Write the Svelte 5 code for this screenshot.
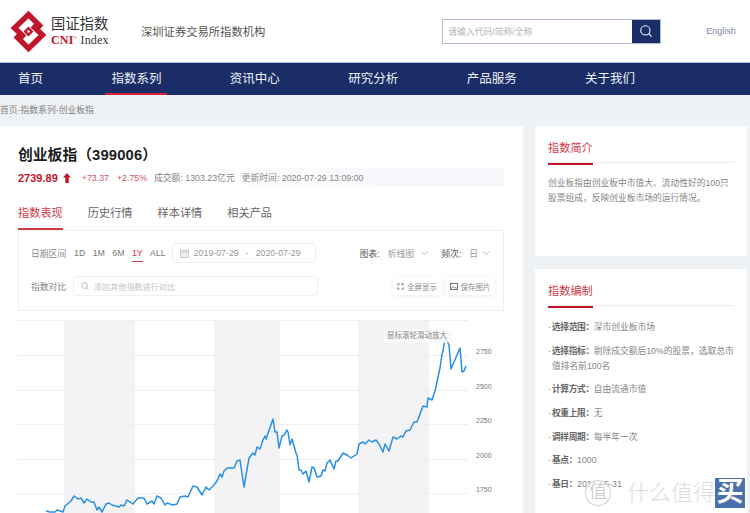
<script>
  const pts = "46,511 50,512 55,512 57,510 63,512 65,506 71,501 74,496 78,499 81,498 84,503 87,499 91,502 94,502 97,510 99,507 102,512 106,504 109,503 112,505 119,507 121,505 124,506 127,500 133,504 138,498 144,498 147,504 152,501 154,504 157,496 161,498 165,505 167,503 173,505 177,504 180,497 185,496 188,497 193,486 197,487 202,495 206,487 209,490 213,486 217,481 220,474 222,477 224,471 227,468 234,468 237,461 240,460 244,487 249,458 253,453 255,455 257,447 260,449 263,440 265,436 266,439 273,419 275,432 277,432 279,448 282,436 284,435 287,430 288,432 290,445 292,439 296,453 297,455 299,470 301,470 303,474 306,471 309,482 312,467 314,468 317,477 321,476 323,470 325,471 327,463 330,460 334,469 336,461 338,461 343,453 347,455 351,458 357,454 359,444 363,442 365,444 369,440 372,442 376,440 379,444 383,452 385,444 389,451 393,437 397,439 401,436 403,437 406,431 410,430 414,422 417,422 423,406 427,407 428,398 432,400 435,391 440,368 442,354 443,351 445,338 447,341 449,345 451,369 460,348 462,372 464,371 466,366";
  const nav = ["首页", "指数系列", "资讯中心", "研究分析", "产品服务", "关于我们"];
  const tabs = ["指数表现", "历史行情", "样本详情", "相关产品"];
  const ranges = ["1D", "1M", "6M", "1Y", "ALL"];
  const bands = [[64, 71], [214, 66], [358, 71]];
  const grid = [320, 355, 390, 424, 459, 493];
  const axis = [[2750, 354], [2500, 389], [2250, 423], [2000, 458], [1750, 492]];
  const rules = [
    ["选择范围", "深市创业板市场"],
    ["选择指标", "剔除成交额后10%的股票，选取总市值排名前100名"],
    ["计算方式", "自由流通市值"],
    ["权重上限", "无"],
    ["调样周期", "每半年一次"],
    ["基点", "1000"],
    ["基日", "2010-05-31"]
  ];
</script>

<div class="page">
  <header class="top">
    <div class="logo">
      <svg class="mark" viewBox="8 8 42 46" width="42" height="46" aria-hidden="true">
        <path d="M41.5 27.5 28.5 14.5 14.5 28 24.5 37.5" fill="none" stroke="#c0152b" stroke-width="5.4"/>
        <path d="M15.5 35.5 28.5 48.5 42.5 35 32.5 25.5" fill="none" stroke="#c0152b" stroke-width="5.4"/>
        <path d="M28.5 26.5 33.5 31.5 28.5 36.5 23.5 31.5Z" fill="#c0152b"/>
        <circle cx="28.5" cy="31.5" r="1.3" fill="#fff"/>
      </svg>
      <div class="logotext">
        <div class="cn">国证指数</div>
        <div class="en"><b>CNI</b><sup>®</sup> Index</div>
      </div>
    </div>
    <div class="tagline">深圳证券交易所指数机构</div>
    <div class="search">
      <span class="ph">请输入代码/简称/全称</span>
      <span class="sbtn">
        <svg viewBox="0 0 16 16" width="14" height="14" fill="none" stroke="#fff" stroke-width="1.2" aria-hidden="true"><circle cx="7.3" cy="7.3" r="5.3"/><path d="M11 11l3.4 3.4"/></svg>
      </span>
    </div>
    <div class="lang">English</div>
  </header>

  <nav class="nav">
    {#each nav as item, i}
      <span class="navitem" class:on={i === 1}>{item}</span>
    {/each}
  </nav>

  <div class="crumb">首页-指数系列-创业板指</div>

  <main class="main">
    <section class="left">
      <h1>创业板指（<span>399006</span>）</h1>
      <div class="quote">
        <b class="price">2739.89</b>
        <svg class="arrow" viewBox="0 0 8 10" width="8" height="10" aria-hidden="true"><path d="M4 0 8 4.6H5.7V10H2.3V4.6H0Z" fill="#c4142b"/></svg>
        <span class="chg first">+73.37</span>
        <span class="chg second">+2.75%</span>
        <span class="meta one">成交额: 1303.23亿元</span>
        <span class="meta">更新时间: 2020-07-29 13:09:00</span>
      </div>
      <div class="tabs">
        {#each tabs as t, i}<span class="tab" class:on={i === 0}>{t}</span>{/each}
      </div>

      <div class="filters">
        <div class="frow r1">
          <span class="flabel">日期区间</span>
          <div class="ranges">
            {#each ranges as r}<span class="range" class:on={r === "1Y"}>{r}</span>{/each}
          </div>
          <div class="datebox">
            <svg viewBox="0 0 9 9" width="9" height="9" aria-hidden="true"><rect x=".5" y="1" width="8" height="7.5" fill="#eee" stroke="#ccc"/><path d="M.5 3h8" stroke="#ccc"/></svg>
            <span class="d1">2019-07-29</span><span class="dash">-</span><span>2020-07-29</span>
          </div>
          <div class="selects">
            <b>图表:</b><span class="val v1">折线图</span>
            <svg class="chev" viewBox="0 0 7 4" width="7" height="4" aria-hidden="true"><path d="M.5.5 3.5 3.5 6.5.5"/></svg>
            <b class="second-b">频次:</b><span class="val v2">日</span>
            <svg class="chev" viewBox="0 0 7 4" width="7" height="4" aria-hidden="true"><path d="M.5.5 3.5 3.5 6.5.5"/></svg>
          </div>
        </div>
        <div class="frow r2">
          <span class="flabel">指数对比</span>
          <div class="cmp">
            <svg viewBox="0 0 8 8" width="8" height="8" fill="none" stroke="#bbb" aria-hidden="true"><circle cx="3.6" cy="3.6" r="2.9"/><path d="M5.8 5.8 7.6 7.6"/></svg>
            <span>添加其他指数进行对比</span>
          </div>
          <div class="btns">
            <span class="btn">
              <svg viewBox="0 0 8 8" width="7" height="7" fill="none" stroke="#666" aria-hidden="true"><path d="M1 3V1h2M5 1h2v2M7 5v2H5M3 7H1V5"/></svg>全屏显示</span>
            <span class="btn">
              <svg viewBox="0 0 9 8" width="8" height="7" fill="none" stroke="#666" aria-hidden="true"><rect x=".5" y=".5" width="8" height="7"/><path d="M1 6.5 3.5 4l2 2 1-1 1.5 1.5"/></svg>保存图片</span>
          </div>
        </div>
      </div>

      <div class="chart">
        <svg viewBox="0 320 523 193" width="523" height="193" aria-hidden="true">
          {#each bands as b}<rect x={b[0]} y="320" width={b[1]} height="193" fill="#f3f3f5"/>{/each}
          {#each grid as g}<path d="M18 {g}.5H468" stroke="#f1edf2"/>{/each}
          <polyline points={pts} fill="none" stroke="#2a8fe3" stroke-width="1.5" stroke-linejoin="round"/>
          {#each axis as a}<text x="476" y={a[1]} class="tick">{a[0]}</text>{/each}
        </svg>
        <div class="hint">鼠标滚轮滑动放大</div>
      </div>
    </section>

    <aside class="right">
      <section class="card c1">
        <div class="ctitle"><span>指数简介</span></div>
        <p>创业板指由创业板中市值大、流动性好的100只股票组成，反映创业板市场的运行情况。</p>
      </section>
      <section class="card c2">
        <div class="ctitle"><span>指数编制</span></div>
        <ul>
          {#each rules as r}
            <li><b>{r[0]}：</b>{r[1]}</li>
          {/each}
        </ul>
      </section>
    </aside>
  </main>

  <div class="wm">
    <span class="wmc">值</span>
    <span class="wmt">什么值得</span>
    <span class="wmb">买</span>
  </div>
</div>

<style>
  :global(body) {
    margin: 0;
    background: #eff2f5;
  }
  .page {
    position: relative;
    width: 750px;
    height: 513px;
    overflow: hidden;
    font-family: "Liberation Sans", "Noto Sans CJK SC", sans-serif;
    color: #666;
  }
  .top {
    position: relative;
    display: flex;
    align-items: center;
    height: 62px;
    background: #fff;
    border-bottom: 1px solid #b9c4da;
    box-sizing: content-box;
  }
  .logo {
    display: flex;
    align-items: center;
    width: 141px;
    padding-left: 8px;
    box-sizing: border-box;
  }
  .mark {
    flex: none;
  }
  .logotext {
    margin-left: 1px;
    color: #333;
    font-family: "Liberation Serif", "Noto Sans CJK SC", serif;
  }
  .cn {
    font-size: 14.3px;
    line-height: 18px;
  }
  .en {
    font-size: 12px;
    line-height: 14px;
    white-space: nowrap;
    letter-spacing: .15px;
  }
  .en b {
    color: #c0152b;
  }
  .en sup {
    font-size: 5px;
    line-height: 0;
    color: #c0152b;
  }
  .tagline {
    font-size: 11.3px;
    color: #555;
    white-space: nowrap;
  }
  .search {
    display: flex;
    align-items: center;
    justify-content: space-between;
    box-sizing: border-box;
    width: 219px;
    height: 25px;
    margin-left: 177px;
    border: 1px solid #b3bfd8;
    background: #fff;
  }
  .ph {
    margin-left: 5px;
    font-size: 8.8px;
    color: #b4b4b4;
  }
  .sbtn {
    display: flex;
    align-items: center;
    justify-content: center;
    width: 28px;
    height: 23px;
    background: #1a2d66;
  }
  .lang {
    margin-left: 45px;
    font-size: 9px;
    color: #7d8aa3;
  }
  .nav {
    display: flex;
    gap: 68.4px;
    height: 32px;
    padding-left: 18px;
    background: #1a2d66;
  }
  .navitem {
    position: relative;
    font-size: 12.5px;
    line-height: 33px;
    color: #eef1f7;
    white-space: nowrap;
  }
  .navitem.on::after {
    content: "";
    position: absolute;
    left: -6px;
    right: -6px;
    bottom: 0;
    height: 2px;
    background: #d3223a;
  }
  .crumb {
    height: 31px;
    font-size: 8.8px;
    line-height: 30px;
    color: #808080;
    white-space: nowrap;
  }
  .main {
    display: grid;
    grid-template-columns: 523px 212px;
    column-gap: 12px;
  }
  .left {
    height: 387px;
    background: #fff;
    overflow: hidden;
  }
  h1 {
    margin: 19px 0 0 18px;
    height: 20px;
    font-size: 14.8px;
    line-height: 20px;
    font-weight: 700;
    color: #1c1c1c;
    white-space: nowrap;
  }
  h1 span {
    letter-spacing: .15px;
  }
  .quote {
    display: flex;
    align-items: center;
    width: 486px;
    height: 19px;
    margin: 3px 0 0 18px;
    background: linear-gradient(90deg, #fff 35%, #f6f8fb 75%);
    font-size: 8.8px;
    white-space: nowrap;
  }
  .price {
    font-size: 11px;
    color: #c4142b;
  }
  .arrow {
    margin-left: 5px;
  }
  .chg {
    color: #cf5160;
  }
  .first {
    margin-left: 11px;
  }
  .second {
    margin-left: 8px;
  }
  .meta {
    color: #858585;
    margin-left: 7px;
  }
  .tabs {
    display: flex;
    gap: 25px;
    margin: 16px 0 0 18px;
    height: 27px;
  }
  .tab {
    box-sizing: border-box;
    height: 27px;
    font-size: 11.2px;
    line-height: 20px;
    color: #666;
    white-space: nowrap;
  }
  .tab.on {
    color: #cf3b4b;
    border-bottom: 2px solid #cf3b4b;
  }
  .filters {
    box-sizing: border-box;
    width: 486px;
    height: 81px;
    margin-left: 18px;
    border: 1px solid #efefef;
    font-size: 8.8px;
    color: #888;
  }
  .frow {
    display: flex;
    align-items: center;
    padding-left: 12px;
    white-space: nowrap;
  }
  .r1 {
    height: 20px;
    margin-top: 12px;
  }
  .r2 {
    height: 20px;
    margin-top: 13px;
  }
  .flabel {
    width: 35px;
    flex: none;
  }
  .ranges {
    display: flex;
    gap: 7.4px;
    margin-left: 8px;
    color: #777;
  }
  .range {
    position: relative;
  }
  .range.on {
    color: #cf3b4b;
  }
  .range.on::after {
    content: "";
    position: absolute;
    left: 0;
    right: 0;
    bottom: -4px;
    height: 1px;
    background: #cf3b4b;
  }
  .datebox {
    display: flex;
    align-items: center;
    box-sizing: border-box;
    width: 144px;
    height: 20px;
    margin-left: 6px;
    padding-left: 7px;
    border: 1px solid #f0f0f0;
    border-radius: 3px;
    color: #999;
  }
  .d1 {
    margin-left: 5px;
  }
  .dash {
    margin: 0 7px;
  }
  .selects {
    display: flex;
    align-items: center;
    margin-left: 44px;
  }
  .selects b {
    font-weight: 400;
    color: #555;
  }
  .second-b {
    margin-left: 13px;
  }
  .val {
    color: #999;
    margin-left: 8px;
  }
  .chev {
    margin-left: 7px;
    fill: none;
    stroke: #aaa;
    stroke-width: .8;
  }
  .v2 + .chev {
    margin-left: 5px;
  }
  .cmp {
    display: flex;
    align-items: center;
    gap: 5px;
    box-sizing: border-box;
    width: 245px;
    height: 20px;
    margin-left: 7px;
    padding-left: 7px;
    border: 1px solid #f0f0f0;
    border-radius: 3px;
    font-size: 8.1px;
    color: #c4c4c4;
  }
  .btns {
    display: flex;
    gap: 5px;
    margin-left: 75px;
  }
  .btn {
    display: flex;
    align-items: center;
    justify-content: center;
    gap: 3px;
    width: 48px;
    height: 18px;
    font-size: 7.5px;
    color: #888;
    background: #fff;
    box-shadow: 0 1px 4px rgba(0, 0, 0, .08);
    border-radius: 2px;
  }
  .chart {
    position: relative;
    height: 193px;
    margin-top: 9px;
  }
  .chart svg {
    display: block;
  }
  .tick {
    font-size: 7px;
    fill: #777;
  }
  .hint {
    position: absolute;
    left: 382px;
    top: 9px;
    width: 70px;
    height: 14px;
    border-radius: 7px;
    background: rgba(248, 248, 249, .9);
    font-size: 7.5px;
    line-height: 14px;
    text-align: center;
    color: #888;
  }
  .right {
    display: flex;
    flex-direction: column;
    gap: 13px;
  }
  .card {
    box-sizing: border-box;
    padding: 12px 13px 0;
    background: #fff;
  }
  .c1 {
    height: 130px;
  }
  .c2 {
    height: 250px;
  }
  .ctitle {
    height: 24px;
    border-bottom: 1px solid #eaeaea;
  }
  .ctitle span {
    display: inline-block;
    box-sizing: border-box;
    height: 25px;
    border-bottom: 2px solid #c4142b;
    font-size: 11.2px;
    line-height: 17px;
    color: #cf3b4b;
  }
  p {
    margin: 13px 0 0;
    font-size: 8.75px;
    line-height: 15px;
    color: #858585;
    width: 184px;
  }
  ul {
    list-style: none;
    margin: 14px 0 0;
    padding: 0 0 0 4px;
    font-size: 8.75px;
    line-height: 15px;
    color: #858585;
  }
  li {
    position: relative;
    margin-bottom: 8.7px;
    width: 184px;
  }
  li::before {
    content: "·";
    position: absolute;
    left: -4px;
    color: #555;
  }
  li b {
    font-weight: 700;
    color: #666;
    letter-spacing: -.4px;
  }
  .wm {
    position: absolute;
    left: 585px;
    top: 478px;
    width: 160px;
    height: 30px;
    display: flex;
    align-items: center;
    pointer-events: none;
  }
  .wmc {
    flex: none;
    box-sizing: border-box;
    width: 26px;
    height: 26px;
    border: 1px solid rgba(190, 190, 190, .7);
    border-radius: 50%;
    background: rgba(255, 255, 255, .85);
    font-size: 18px;
    font-weight: 300;
    line-height: 22px;
    text-align: center;
    color: #c4c4c4;
  }
  .wmt {
    margin-left: 16px;
    font-size: 22px;
    font-weight: 300;
    line-height: 30px;
    white-space: nowrap;
    color: rgba(205, 205, 205, .7);
  }
  .wmb {
    position: absolute;
    left: 130px;
    top: 0;
    width: 30px;
    height: 30px;
    background: #4a6fae;
    color: #fff;
    font-size: 27px;
    font-weight: 700;
    line-height: 29px;
    text-align: center;
  }
</style>
